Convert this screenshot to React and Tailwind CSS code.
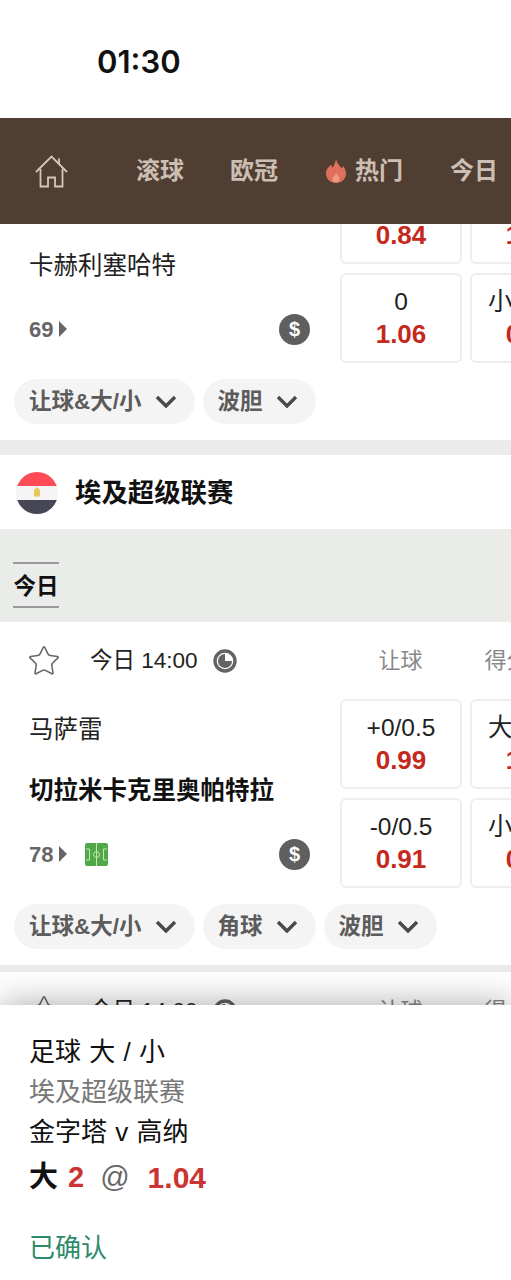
import { Star } from "lucide-react";

const font = { fontFamily: '"Liberation Sans", "Noto Sans CJK SC", sans-serif' };

function HomeIcon() {
  return (
    <svg viewBox="0 0 33 33" className="w-[33px] h-[33px] shrink-0" fill="none" stroke="#d3c7bb" strokeWidth="1.8">
      <path d="M1 17 L16.5 1.5 L32 17" />
      <path d="M24 9 V3.5" />
      <path d="M5.5 14 V31.5 H13 V22.5 H20 V31.5 H27.5 V14" />
    </svg>
  );
}

function Flame() {
  return (
    <svg viewBox="0 0 20 24" className="w-[20px] h-[24px] shrink-0">
      <path
        fill="#e0705a"
        d="M10 0 C11 4 13 6 15.5 9 C16.5 8.5 17 8 17.2 7 C19 9.5 20 12 20 14.5 C20 20 15.5 24 10 24 C4.5 24 0 20 0 14.5 C0 10 3 8 5 5.5 C5.5 7 6 8 7 8.5 C8 6 9.5 3 10 0 Z"
      />
      <path fill="#ee9a84" d="M10 14 C11 16 13.5 17.5 13.5 20 C13.5 22 12 23.5 10 23.5 C8 23.5 6.5 22 6.5 20 C6.5 18 9 16.5 10 14 Z" />
    </svg>
  );
}

function Flag() {
  return (
    <svg viewBox="0 0 42 42" className="w-[42px] h-[42px] shrink-0">
      <defs>
        <clipPath id="flag-clip">
          <circle cx="21" cy="21" r="21" />
        </clipPath>
      </defs>
      <g clipPath="url(#flag-clip)">
        <rect width="42" height="14" fill="#ff4b55" />
        <rect y="14" width="42" height="14" fill="#f5f5f5" />
        <rect y="28" width="42" height="14" fill="#464655" />
        <path d="M18 24.5 V18 L21 15 L24 18 V24.5 Z" fill="#e8c95a" />
      </g>
    </svg>
  );
}

function ClockIcon() {
  return (
    <svg viewBox="0 0 24 24" className="w-[24px] h-[24px] shrink-0">
      <circle cx="12" cy="12" r="10" fill="none" stroke="#636363" strokeWidth="3.4" />
      <path d="M12 5 A7 7 0 1 0 19 12 H12 Z" fill="#636363" />
    </svg>
  );
}

function PitchIcon() {
  return (
    <svg viewBox="0 0 23 23" className="w-[23px] h-[23px] ml-[18px] shrink-0">
      <rect width="23" height="23" rx="2" fill="#4fa84a" />
      <g fill="none" stroke="#c9e8a8" strokeWidth="1">
        <path d="M11.5 0 V23" />
        <circle cx="11.5" cy="11.5" r="3" />
        <path d="M1 6 H4.5 V17 H1" />
        <path d="M22 6 H18.5 V17 H22" />
      </g>
    </svg>
  );
}

function Chevron() {
  return (
    <svg viewBox="0 0 22 13" className="w-[22px] h-[13px] shrink-0" fill="none" stroke="#4a4a4a" strokeWidth="3.4">
      <path d="M2 2 L11 11 L20 2" />
    </svg>
  );
}

function OddsBox({ line, odds, clipped }) {
  return (
    <div
      className={`w-[122px] shrink-0 border-2 border-[#eeeeee] flex flex-col items-center ${
        clipped ? "h-[40px] border-t-0 rounded-b-md" : "h-[90px] rounded-md pt-[11px]"
      }`}
    >
      {line && <div className="text-[24.5px] leading-[32px] text-[#222222] whitespace-nowrap">{line}</div>}
      <div className={`text-[26px] leading-[32px] font-bold text-[#c5281c] ${clipped ? "-mt-[5px]" : ""}`}>{odds}</div>
    </div>
  );
}

function OddsRow({ boxes }) {
  return (
    <div className="flex gap-[8px]">
      {boxes.map((box, index) => (
        <OddsBox key={index} {...box} />
      ))}
    </div>
  );
}

function Meta({ minutes, pitch }) {
  return (
    <div className="h-[68px] flex items-center pr-[30px]">
      <span className="text-[22px] font-bold text-[#666666]">{minutes}</span>
      <svg viewBox="0 0 8 16" className="w-[8px] h-[16px] ml-[6px] shrink-0">
        <path d="M0 0 L8 8 L0 16 Z" fill="#666666" />
      </svg>
      {pitch && <PitchIcon />}
      <div className="ml-auto w-[31px] h-[31px] rounded-full bg-[#5f5f5f] text-white text-[20px] font-bold flex items-center justify-center">
        $
      </div>
    </div>
  );
}

function Pills({ items }) {
  return (
    <div className="flex gap-[8px] pl-[14px] pt-[16px] pb-[16px]">
      {items.map((item) => (
        <div
          key={item}
          className="h-[45px] flex items-center gap-[13px] pl-[15px] pr-[18px] rounded-full bg-[#f4f4f4] text-[22.5px] font-bold text-[#5c5c5c] whitespace-nowrap"
        >
          {item}
          <Chevron />
        </div>
      ))}
    </div>
  );
}

function TimeRow() {
  return (
    <div className="h-[77px] flex items-center shrink-0">
      <div className="w-[90px] pl-[27px] shrink-0">
        <Star className="w-[34px] h-[34px]" strokeWidth={1.1} color="#666666" />
      </div>
      <span className="text-[22.5px] text-[#222222] whitespace-nowrap">今日 14:00</span>
      <div className="ml-[15px]">
        <ClockIcon />
      </div>
      <span className="ml-[142px] text-[22px] text-[#888888] whitespace-nowrap">让球</span>
      <span className="ml-[62px] text-[22px] text-[#888888] whitespace-nowrap">得分</span>
    </div>
  );
}

export default function App() {
  return (
    <div style={font} className="w-[511px] h-[1280px] overflow-hidden flex flex-col bg-white">
      <div className="h-[118px] shrink-0 pl-[97px] pt-[41px]">
        <div className="text-[31px] leading-[42px] font-semibold text-[#111111]" style={{ fontFamily: "Inter, sans-serif" }}>
          01:30
        </div>
      </div>

      <div className="h-[106px] shrink-0 bg-[#513e33] flex items-center pl-[35px] text-[24px] font-semibold text-[#cbbfb3] whitespace-nowrap">
        <HomeIcon />
        <span className="ml-[68px]">滚球</span>
        <span className="ml-[46px]">欧冠</span>
        <span className="ml-[48px] flex items-center gap-[9px]">
          <Flame />
          热门
        </span>
        <span className="ml-[47px]">今日</span>
      </div>

      <div className="flex-1 min-h-0 overflow-hidden">
        <div className="flex">
          <div className="w-[340px] shrink-0 pl-[29px] flex flex-col justify-end">
            <div className="h-[60px] pt-[3px] flex items-center text-[24.5px] text-[#222222]">卡赫利塞哈特</div>
            <Meta minutes="69" />
          </div>
          <div className="flex flex-col gap-[9px]">
            <OddsRow boxes={[{ odds: "0.84", clipped: true }, { odds: "1.06", clipped: true }]} />
            <OddsRow boxes={[{ line: "0", odds: "1.06" }, { line: "小 2/2.5", odds: "0.84" }]} />
          </div>
        </div>
        <Pills items={["让球&大/小", "波胆"]} />

        <div className="h-[15px] bg-[#ebebeb]" />

        <div className="h-[74px] flex items-center pl-[16px] pt-[2px] gap-[17px]">
          <Flag />
          <span className="text-[26.4px] pt-[2px] font-bold text-[#111111]">埃及超级联赛</span>
        </div>

        <div className="h-[93px] bg-[#eaecea] pl-[13px] pt-[33px]">
          <div className="w-[46px] h-[46px] pt-[3px] border-y-2 border-[#999999] flex items-center justify-center text-[22.5px] font-bold text-[#111111]">
            今日
          </div>
        </div>

        <TimeRow />

        <div className="flex">
          <div className="w-[340px] shrink-0 pl-[29px] flex flex-col justify-end">
            <div className="h-[60px] mb-px pt-[3px] flex items-center text-[24.5px] text-[#222222]">马萨雷</div>
            <div className="h-[60px] pt-[3px] flex items-center text-[24.5px] font-bold text-[#111111] whitespace-nowrap">切拉米卡克里奥帕特拉</div>
            <Meta minutes="78" pitch />
          </div>
          <div className="flex flex-col gap-[9px]">
            <OddsRow boxes={[{ line: "+0/0.5", odds: "0.99" }, { line: "大 2/2.5", odds: "1.04" }]} />
            <OddsRow boxes={[{ line: "-0/0.5", odds: "0.91" }, { line: "小 2/2.5", odds: "0.86" }]} />
          </div>
        </div>
        <Pills items={["让球&大/小", "角球", "波胆"]} />

        <div className="h-[7px] bg-[#ebebeb]" />

        <TimeRow />
      </div>

      <div className="relative z-10 h-[275px] shrink-0 bg-white pl-[29px] pt-[28px] shadow-[0_0_34px_rgba(0,0,0,0.35)]">
        <div className="h-[39px] flex items-center text-[26px] text-[#111111] [word-spacing:1px]">足球 大 / 小</div>
        <div className="h-[40px] flex items-center text-[26px] text-[#777777]">埃及超级联赛</div>
        <div className="h-[40px] flex items-center text-[26px] text-[#111111] [word-spacing:1px]">金字塔 v 高纳</div>
        <div className="h-[52px] flex items-center text-[29px] font-bold whitespace-nowrap">
          <span className="text-[#111111]">大</span>
          <span className="ml-[10px] text-[#cc3333]">2</span>
          <span className="ml-[16px] font-normal text-[#666666]">@</span>
          <span className="ml-[18px] mb-[2px] text-[30px] text-[#cc3333]">1.04</span>
        </div>
        <div className="mt-[24px] h-[40px] flex items-center text-[26px] text-[#2e8b6a]">已确认</div>
      </div>
    </div>
  );
}
